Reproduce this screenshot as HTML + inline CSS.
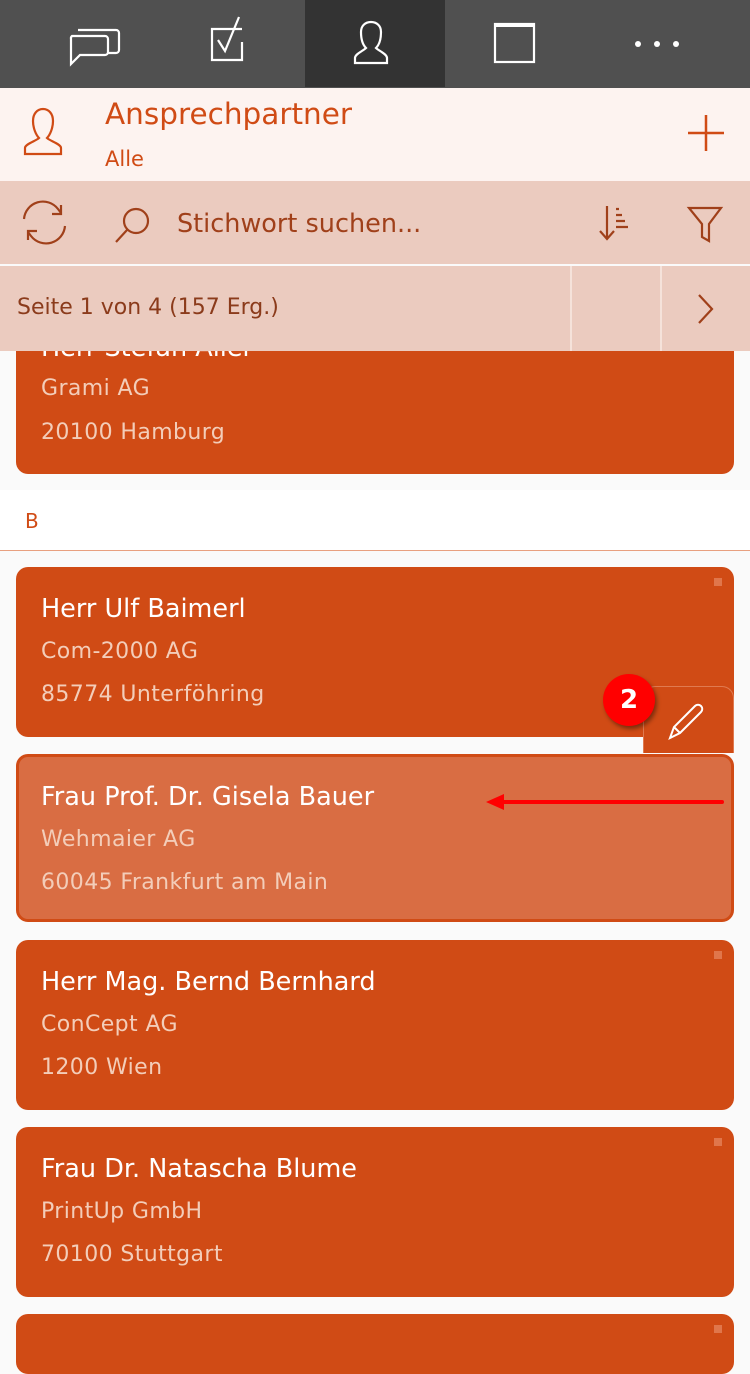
<!DOCTYPE html><html><head><meta charset="utf-8"><style>
body{margin:0;width:750px;height:1334px;overflow:hidden;background:#fafafa;font-family:"DejaVu Sans","Liberation Sans",sans-serif;position:relative}
.a{position:absolute}
.card{position:absolute;left:16px;width:718px;background:#d04b15;border-radius:12px;color:#fff;box-sizing:border-box}
.card .n{position:absolute;left:25px;top:27px;font-size:25.5px}
.card .n b{font-weight:500}
.card .l{position:absolute;left:25px;font-size:22px;color:#f3cdb9;letter-spacing:.4px}
.sq{position:absolute;right:12px;top:11px;width:8px;height:8px;background:#e0764b}
</style></head><body>
<div class="a" style="left:0;top:0;width:750px;height:88px;background:#505050"></div>
<div class="a" style="left:305px;top:0;width:140px;height:87px;background:#333"></div>
<svg class="a" style="left:0;top:0" width="750" height="88" fill="none" stroke="#fff" stroke-width="2.2">
<path d="M78 30h38a3 3 0 0 1 3 3v17a3 3 0 0 1-3 3h-8"/><path d="M72 36h33a3 3 0 0 1 3 3v13a3 3 0 0 1-3 3H80l-9 9V39a3 3 0 0 1 1-3z"/>
<path d="M242 29h-30v31h30V42"/><path d="M218 40l7 11 14-34"/>
<path d="M355 63v-5c0-4 8-7 11-10-3-3-5-9-5-16 0-6 4-10 10-10s10 4 10 10c0 7-2 13-5 16 3 3 11 6 11 10v5z"/>
<rect x="495" y="24" width="39" height="38"/><path d="M495 25h39" stroke-width="4"/>
</svg>
<div class="a" style="left:635px;top:41px;width:6px;height:6px;border-radius:3px;background:#fff;box-shadow:19px 0 #fff,38px 0 #fff"></div>
<div class="card" style="top:300px;height:174px"><div class="n" style="top:33px">Herr <b>Stefan Aller</b></div><div class="l" style="top:76px">Grami AG</div><div class="l" style="top:120px">20100 Hamburg</div></div>
<div class="a" style="left:0;top:88px;width:750px;height:93px;background:#fdf3f0"></div>
<svg class="a" style="left:0;top:88px" width="750" height="93" fill="none" stroke="#d04b15" stroke-width="2.2">
<path d="M25 66v-6c0-4 11-7 14-10-3-3-6-10-6-17 0-7 4-12 10-12s10 5 10 12c0 7-3 14-6 17 3 3 14 6 14 10v6z"/>
<path d="M706 27v36M688 45h36" stroke-width="2.5"/></svg>
<div class="a" style="left:105px;top:97px;font-size:29.5px;color:#d04b15">Ansprechpartner</div>
<div class="a" style="left:105px;top:147px;font-size:21px;color:#d04b15">Alle</div>
<div class="a" style="left:0;top:181px;width:750px;height:83px;background:#ebcbbf"></div>
<div class="a" style="left:0;top:266px;width:750px;height:85px;background:#ebcbbf"></div>
<div class="a" style="left:570px;top:266px;width:2px;height:85px;background:#f5e2da"></div>
<div class="a" style="left:660px;top:266px;width:2px;height:85px;background:#f5e2da"></div>
<svg class="a" style="left:0;top:181px" width="750" height="170" fill="none" stroke="#a0401a" stroke-width="2.2">
<path d="M24 38a19 19 0 0 1 34-10l3 4M65 45a19 19 0 0 1-34 10l-3-4"/><path d="M61 24v9h-9M28 59v-9h9"/>
<circle cx="136" cy="40" r="12"/><path d="M127 49l-11 12"/>
<path d="M607 25v32M600 50l7 8 7-8M616 28h3M616 34h6M616 40h9M616 46h12"/>
<path d="M689 27h32l-12 16v17l-7-4V43z"/>
<path d="M699 114l13 14-13 14"/></svg>
<div class="a" style="left:177px;top:209px;font-size:25.5px;color:#a0401a">Stichwort suchen...</div>
<div class="a" style="left:17px;top:295px;font-size:22px;color:#8b3b1b">Seite 1 von 4 (157 Erg.)</div>
<div class="a" style="left:0;top:490px;width:750px;height:60px;background:#fff;border-bottom:1px solid #e8a080"></div>
<div class="a" style="left:25px;top:509px;font-size:20px;color:#d04b15">B</div>
<div class="card" style="top:567px;height:170px"><div class="sq"></div><div class="n">Herr <b>Ulf Baimerl</b></div><div class="l" style="top:72px">Com-2000 AG</div><div class="l" style="top:115px">85774 Unterföhring</div></div>
<div class="card" style="top:754px;height:168px;background:#d96d43;border:3px solid #d04b15"><div class="n" style="left:22px;top:25px">Frau Prof. Dr. <b>Gisela Bauer</b></div><div class="l" style="left:22px;top:70px">Wehmaier AG</div><div class="l" style="left:22px;top:113px">60045 Frankfurt am Main</div></div>
<div class="card" style="top:940px;height:170px"><div class="sq"></div><div class="n">Herr Mag. <b>Bernd Bernhard</b></div><div class="l" style="top:72px">ConCept AG</div><div class="l" style="top:115px">1200 Wien</div></div>
<div class="card" style="top:1127px;height:170px"><div class="sq"></div><div class="n">Frau Dr. <b>Natascha Blume</b></div><div class="l" style="top:72px">PrintUp GmbH</div><div class="l" style="top:115px">70100 Stuttgart</div></div>
<div class="card" style="top:1314px;height:60px"><div class="sq"></div></div>
<div class="a" style="left:643px;top:686px;width:91px;height:67px;background:#d04b15;border:1px solid #e07a50;border-bottom:none;border-radius:12px 12px 0 0;box-sizing:border-box"></div>
<svg class="a" style="left:643px;top:686px" width="91" height="67" fill="none" stroke="#fff" stroke-width="2"><path d="M27 52l4-11 21-21a4 4 0 0 1 6 6L37 47zM31 41l6 6"/></svg>
<div class="a" style="left:603px;top:674px;width:52px;height:52px;border-radius:26px;background:#f00;box-shadow:2px 3px 4px rgba(0,0,0,.4);color:#fff;font-weight:bold;font-size:26px;text-align:center;line-height:52px">2</div>
<svg class="a" style="left:480px;top:790px" width="250" height="24"><path d="M20 12h222" stroke="#f00" stroke-width="4" stroke-linecap="round"/><path d="M6 12l18-8v16z" fill="#f00"/></svg>
</body></html>
